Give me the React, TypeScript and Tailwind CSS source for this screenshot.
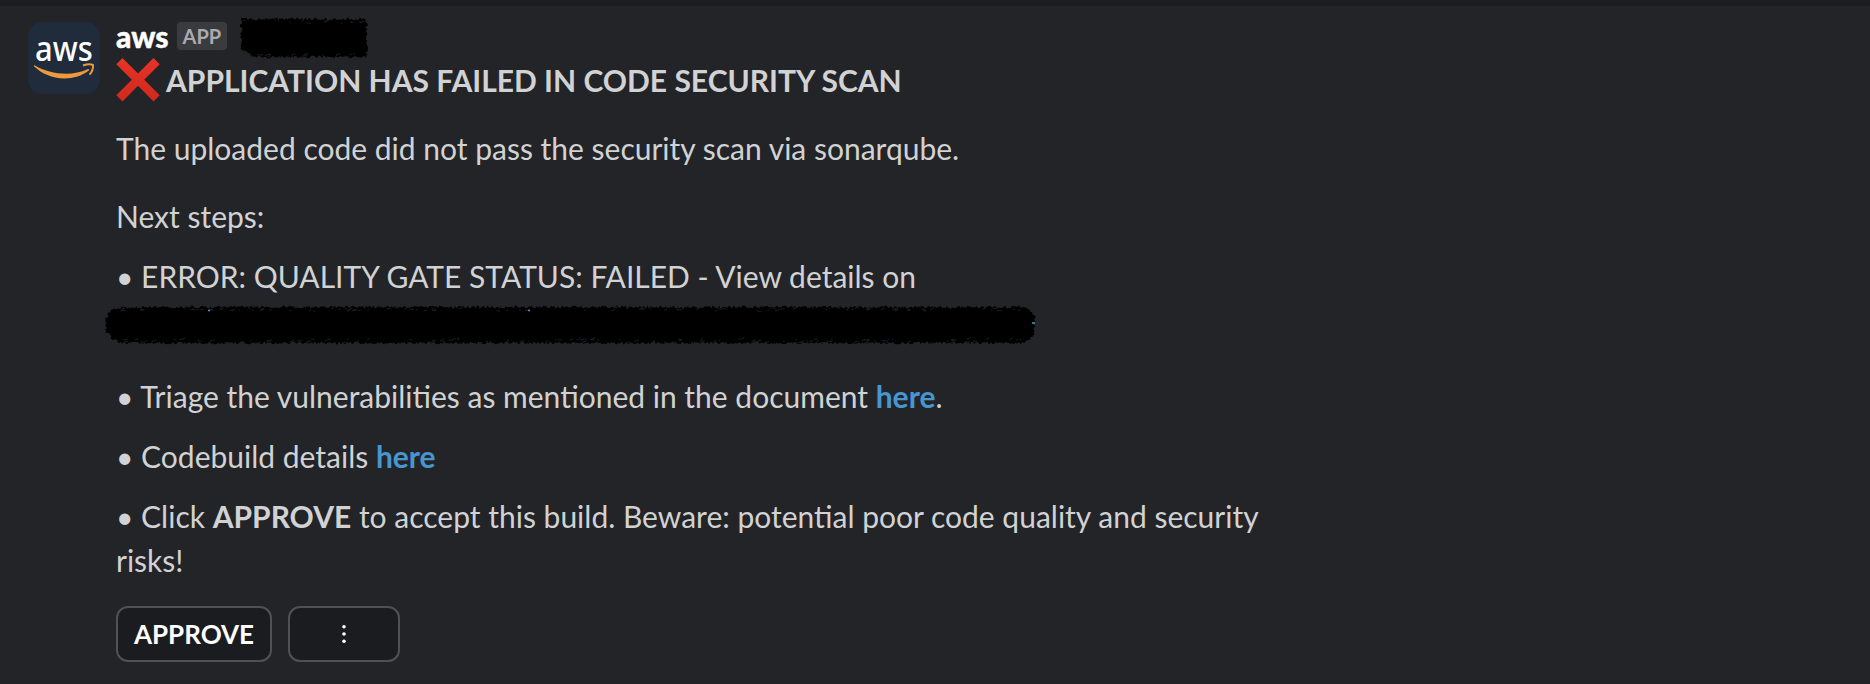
const noise = (seed: number) => {
  let s = seed;
  return () => {
    s = (s * 16807) % 2147483647;
    return s / 2147483647;
  };
};

type Pt = [number, number];

function roughen(corners: Pt[], seed: number, amp: number): string {
  const rnd = noise(seed);
  const out: string[] = [];
  corners.forEach(([x1, y1], i) => {
    const [x2, y2] = corners[(i + 1) % corners.length];
    const len = Math.hypot(x2 - x1, y2 - y1);
    const steps = Math.max(1, Math.round(len / 1.3));
    for (let k = 0; k < steps; k++) {
      const t = k / steps;
      const d = (rnd() - 0.5) * amp;
      const px = x1 + (x2 - x1) * t - ((y2 - y1) / len) * d;
      const py = y1 + (y2 - y1) * t + ((x2 - x1) / len) * d;
      out.push(`${px.toFixed(1)} ${py.toFixed(1)}`);
    }
  });
  return `M${out.join("L")}Z`;
}

function flecks(x0: number, x1: number, bands: Pt[], count: number, seed: number): string {
  const rnd = noise(seed);
  let d = "";
  for (let i = 0; i < count; i++) {
    const [a, b] = bands[i % bands.length];
    const x = x0 + rnd() * (x1 - x0);
    const y = a + rnd() * (b - a);
    d += `M${x.toFixed(1)} ${y.toFixed(1)}l${(1 + rnd() * 4).toFixed(1)} ${((rnd() - 0.7) * 3).toFixed(1)}`;
  }
  return d;
}

function NameMask() {
  return (
    <svg className="absolute left-[239px] top-[16px]" width="130" height="44" viewBox="0 0 130 44">
      <path d={roughen([[2, 3], [127.5, 3], [127.5, 41], [14, 41], [8, 35], [2, 34]], 77, 3)} fill="#000" />
      <path d={flecks(4, 122, [[2, 7], [38, 41]], 40, 19)} stroke="#232428" strokeWidth="0.8" />
    </svg>
  );
}

function LinkMask() {
  return (
    <svg className="absolute -left-[12px] top-0" width="934" height="42" viewBox="0 0 934 42">
      <path
        d={roughen([[18, 3], [918, 3], [926, 6], [930.5, 13], [930.5, 29], [926, 36], [917, 39], [18, 39], [8, 35], [2, 27], [2, 14], [8, 6]], 4242, 2.8)}
        fill="#000"
      />
      <path d={flecks(14, 916, [[3, 7], [35, 39]], 260, 311)} stroke="#232428" strokeWidth="0.8" />
      <path d="M104 6.5h2M424 6.5h2M928 19h3" stroke="#4796d0" strokeWidth="1.6" />
    </svg>
  );
}

function Avatar() {
  return (
    <svg className="mt-4 h-18 w-18 shrink-0" viewBox="0 0 72 72">
      <rect width="72" height="72" rx="14" fill="#202b3c" />
      <text x="7" y="38.6" textLength="57.7" lengthAdjust="spacingAndGlyphs" fontSize="34.5" fontWeight="500" fontFamily="'Noto Sans', sans-serif" fill="#fff">
        aws
      </text>
      <path d="M6.5 43.2C22 52.5 44 54.500 59.500 47.200C61 46.500 61.800 47.800 60.500 48.800C54 54 45 56.500 36 56.400C24 56.200 14 51.800 6.200 44.500C5.600 43.800 6 43 6.500 43.200Z" fill="#ec9a3c" />
      <path d="M55 43.500C59 42 63 42 65 43C65.200 46.500 64 50 61.500 52.600" fill="none" stroke="#ec9a3c" strokeWidth="2" strokeLinejoin="round" />
    </svg>
  );
}

function CrossMark() {
  return (
    <svg className="h-11 w-11 shrink-0" viewBox="0 0 44 44">
      <defs>
        <linearGradient id="cross" x1="0" y1="0" x2="0" y2="1">
          <stop offset="0" stopColor="#e73426" />
          <stop offset="1" stopColor="#cf291d" />
        </linearGradient>
      </defs>
      <path d="M6.5 0L22 15.6L37.5 0L43.7 6.2L28.2 21.7L43.7 37.2L37.5 43.4L22 27.8L6.5 43.4L.3 37.2L15.8 21.7L.3 6.200Z" fill="url(#cross)" />
    </svg>
  );
}

export default function App() {
  return (
    <div className="flex h-[684px] w-full flex-col overflow-hidden bg-[#232428] font-['Lato',sans-serif] text-[30px] leading-[44px] text-[#d1d2d3]">
      <div className="h-1.5 shrink-0 bg-[#1c1d21]" />
      <div className="relative -mt-1.5 flex gap-4 pl-7 pt-1.5">
        <Avatar />
        <NameMask />
        <div className="w-[1180px]">
          <div className="mt-2.5 flex h-[42px] items-center gap-2">
            <span className="-mt-0.5 text-[30px] font-black text-white [-webkit-text-stroke:0.4px_white]">aws</span>
            <span className="-mt-0.5 flex h-7 items-center rounded-[4px] bg-[#3a3b3f] px-1.5 text-[20px] font-bold text-[#ababad]">APP</span>
          </div>
          <h1 className="flex h-11 items-center gap-[6px] font-bold">
            <CrossMark />
            APPLICATION HAS FAILED IN CODE SECURITY SCAN
          </h1>
          <p className="mt-6">The uploaded code did not pass the security scan via sonarqube.</p>
          <p className="mt-6">Next steps:</p>
          <p className="mt-4">• ERROR: QUALITY GATE STATUS: FAILED - View details on</p>
          <div className="relative mt-[6px] h-[42px]">
            <LinkMask />
          </div>
          <p className="mt-[28px]">
            • Triage the vulnerabilities as mentioned in the document <a className="font-bold text-[#4796d0]">here</a>.
          </p>
          <p className="mt-4">
            • Codebuild details <a className="font-bold text-[#4796d0]">here</a>
          </p>
          <p className="mt-4">
            • Click <b className="font-bold">APPROVE</b> to accept this build. Beware: potential poor code quality and security risks!
          </p>
          <div className="mt-6 flex gap-4">
            <button className="flex h-14 w-[156px] items-center justify-center rounded-xl border-2 border-[#505155] bg-[#1b1c20] text-[26px] font-bold text-white">
              APPROVE
            </button>
            <button className="flex h-14 w-28 items-center justify-center rounded-xl border-2 border-[#505155] bg-[#1b1c20]">
              <svg width="6" height="20" viewBox="0 0 6 20" fill="#fff">
                <circle cx="3" cy="2.7" r="1.8" />
                <circle cx="3" cy="10" r="1.8" />
                <circle cx="3" cy="17.3" r="1.8" />
              </svg>
            </button>
          </div>
        </div>
      </div>
    </div>
  );
}
